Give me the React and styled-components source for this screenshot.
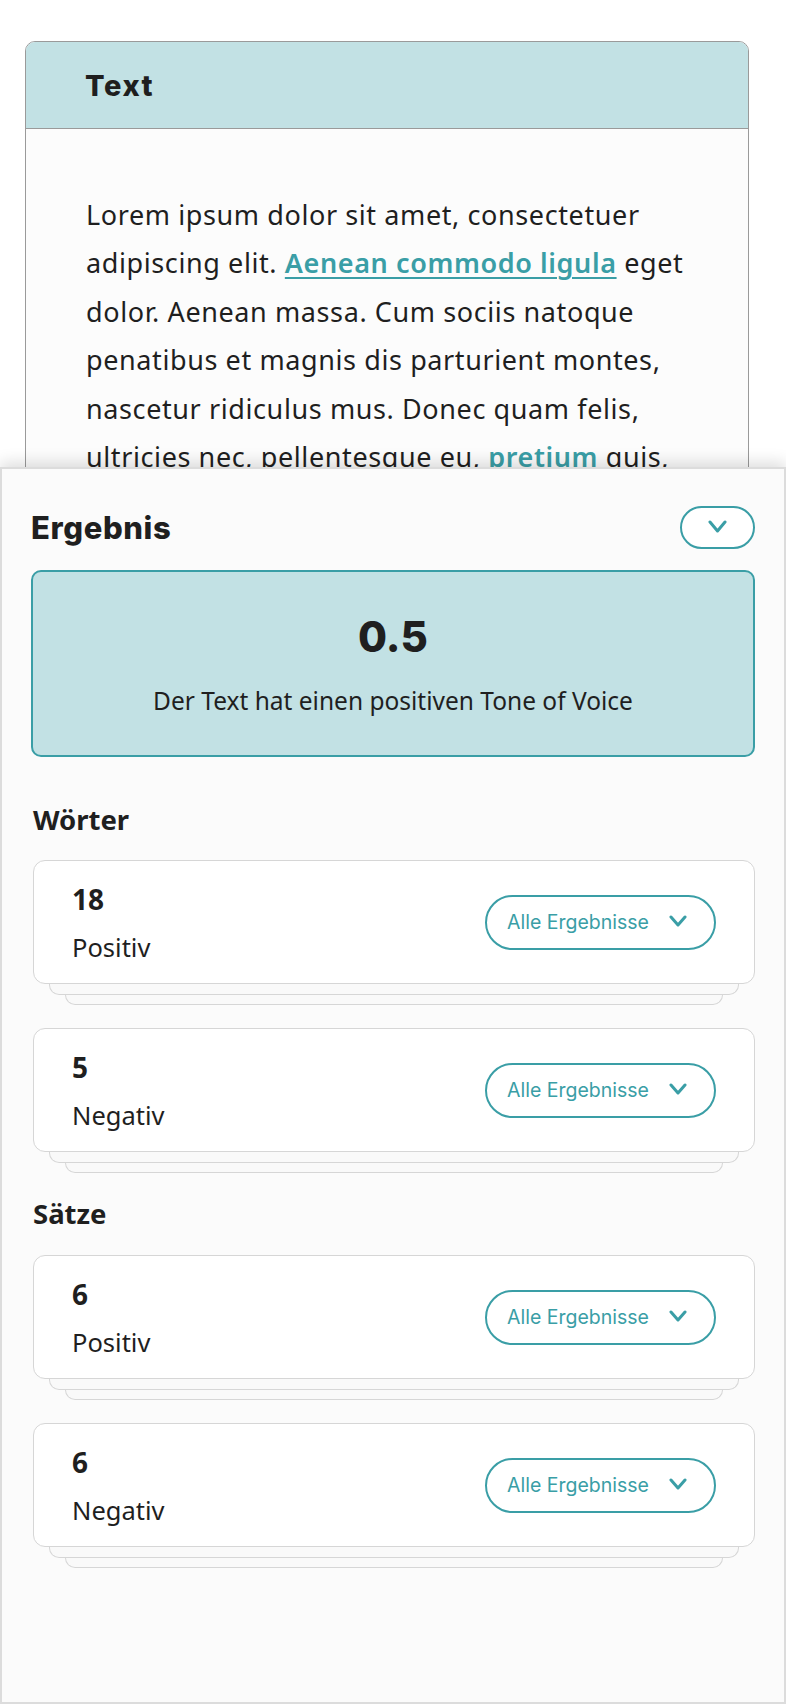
import styled, { createGlobalStyle } from "styled-components";

const TEAL = "#3a9ea6";
const TEAL_LIGHT = "#c2e1e4";
const INK = "#1f1f1f";

const GlobalStyle = createGlobalStyle`
  html, body {
    margin: 0;
    padding: 0;
    background: #ffffff;
    overflow: hidden;
  }
  #root {
    position: relative;
    width: 786px;
    height: 1704px;
    overflow: hidden;
  }
  * {
    box-sizing: border-box;
    font-variant-ligatures: none;
  }
`;

const Page = styled.div`
  padding: 41px 37px 0 25px;
  font-family: "Noto Sans", "Open Sans", sans-serif;
  color: ${INK};
`;

const TextCard = styled.section`
  border: 1.5px solid #9a9a9a;
  border-radius: 10px 10px 0 0;
  background: #fcfcfc;
  overflow: hidden;
`;

const CardHeader = styled.header`
  height: 87px;
  display: flex;
  align-items: center;
  padding-left: 59px;
  background: ${TEAL_LIGHT};
  border-bottom: 1.5px solid #9a9a9a;
`;

const CardTitle = styled.h1`
  margin: 0;
  font-family: "Inter", sans-serif;
  font-weight: 800;
  font-size: 29px;
  letter-spacing: 1.6px;
`;

const Paragraph = styled.p`
  margin: 0;
  padding: 62px 50px 60px 60px;
  font-size: 27px;
  letter-spacing: 0.6px;
  line-height: 48.4px;
`;

const InlineLink = styled.a`
  color: ${TEAL};
  font-weight: 600;
  text-decoration: ${(p) => (p.$underline ? "underline" : "none")};
  text-decoration-thickness: 2px;
  text-underline-offset: 4px;
`;

/* bottom sheet that slides over the text card */
const Sheet = styled.aside`
  position: absolute;
  top: 467px;
  left: 0;
  right: 0;
  bottom: 0;
  background: #fbfbfb;
  border: 2px solid #dcdcdc;
  box-shadow: 0 -5px 14px rgba(0, 0, 0, 0.13);
  padding: 37px 29px 0 29px;
  font-family: "Noto Sans", "Open Sans", sans-serif;
  color: ${INK};
`;

const SheetHead = styled.div`
  display: flex;
  align-items: center;
  justify-content: space-between;
`;

const SheetTitle = styled.h2`
  margin: 0;
  font-family: "Inter", sans-serif;
  font-weight: 800;
  font-size: 31px;
  letter-spacing: 0.6px;
`;

const PillButton = styled.button`
  display: flex;
  align-items: center;
  justify-content: center;
  gap: 20px;
  height: ${(p) => p.$h}px;
  min-width: ${(p) => p.$w}px;
  padding: 0 ${(p) => p.$pr}px 0 ${(p) => p.$pl}px;
  border: 2px solid ${TEAL};
  border-radius: 999px;
  background: #ffffff;
  color: ${TEAL};
  font-family: "Inter", sans-serif;
  font-size: 19.5px;
  cursor: pointer;
`;

const ScoreBox = styled.div`
  margin-top: 21px;
  height: 187px;
  border: 2px solid ${TEAL};
  border-radius: 10px;
  background: ${TEAL_LIGHT};
  display: flex;
  flex-direction: column;
  align-items: center;
  padding-top: 40px;
`;

const Score = styled.div`
  font-family: "Inter", sans-serif;
  font-weight: 800;
  font-size: 42px;
  line-height: 50px;
`;

const ScoreNote = styled.div`
  margin-top: 24px;
  font-size: 24.5px;
  line-height: 30px;
`;

const SectionTitle = styled.h3`
  margin: ${(p) => p.$top}px 0 ${(p) => p.$bottom}px 2px;
  font-weight: 700;
  font-size: 27.5px;
  line-height: 32px;
`;

const Stack = styled.div`
  margin: 0 0 ${(p) => p.$gap}px 2px;
`;

const ResultCard = styled.div`
  position: relative;
  z-index: 2;
  height: 124px;
  display: flex;
  align-items: center;
  justify-content: space-between;
  padding: 0 38px;
  background: #ffffff;
  border: 1.5px solid #d6d6d6;
  border-radius: 12px;
`;

const StackLayer = styled.div`
  height: ${(p) => p.$h}px;
  margin: 0 ${(p) => p.$inset}px;
  border: 1.5px solid #d6d6d6;
  border-top: none;
  border-radius: 0 0 10px 10px;
  background: #f9f9f9;
`;

const Figures = styled.div`
  display: flex;
  flex-direction: column;
  gap: 18px;
  padding-top: 2px;
`;

const Count = styled.div`
  font-weight: 700;
  font-size: 28px;
  line-height: 30px;
`;

const Label = styled.div`
  font-size: 25.5px;
  line-height: 30px;
`;

const Chevron = ({ w = 18, h = 10 }) => (
  <svg width={w} height={h + 4} viewBox={`0 0 ${w} ${h + 4}`} fill="none">
    <polyline
      points={`2,2 ${w / 2},${h} ${w - 2},2`}
      stroke={TEAL}
      strokeWidth="3"
      strokeLinecap="round"
      strokeLinejoin="round"
    />
  </svg>
);

// margins collapse with the previous stack's bottom margin (22px)
const groups = [
  {
    title: "Wörter",
    top: 47,
    bottom: 24,
    rows: [
      { count: 18, label: "Positiv" },
      { count: 5, label: "Negativ" },
    ],
  },
  {
    title: "Sätze",
    top: 25,
    bottom: 25,
    rows: [
      { count: 6, label: "Positiv" },
      { count: 6, label: "Negativ" },
    ],
  },
];

const Result = ({ count, label, gap }) => (
  <Stack $gap={gap}>
    <ResultCard>
      <Figures>
        <Count>{count}</Count>
        <Label>{label}</Label>
      </Figures>
      <PillButton $h={55} $w={231} $pl={17} $pr={24}>
        Alle Ergebnisse
        <Chevron />
      </PillButton>
    </ResultCard>
    <StackLayer $h={11} $inset={16} />
    <StackLayer $h={10} $inset={32} />
  </Stack>
);

export default function App() {
  return (
    <>
      <GlobalStyle />
      <Page>
        <TextCard>
          <CardHeader>
            <CardTitle>Text</CardTitle>
          </CardHeader>
          <Paragraph>
            Lorem ipsum dolor sit amet, consectetuer adipiscing elit.{" "}
            <InlineLink href="#" $underline>
              Aenean commodo ligula
            </InlineLink>{" "}
            eget dolor. Aenean massa. Cum sociis natoque penatibus et magnis dis
            parturient montes, nascetur ridiculus mus. Donec quam felis,
            ultricies nec, pellentesque eu, <InlineLink href="#">pretium</InlineLink>{" "}
            quis, sem. Nulla consequat massa quis enim. Donec pede justo,
            fringilla vel, aliquet nec, vulputate eget, arcu. In enim justo,
            rhoncus ut, imperdiet a, venenatis vitae, justo.
          </Paragraph>
        </TextCard>
      </Page>

      <Sheet>
        <SheetHead>
          <SheetTitle>Ergebnis</SheetTitle>
          <PillButton $h={43} $w={75} $pl={0} $pr={0}>
            <Chevron w={19} h={11} />
          </PillButton>
        </SheetHead>

        <ScoreBox>
          <Score>0.5</Score>
          <ScoreNote>Der Text hat einen positiven Tone of Voice</ScoreNote>
        </ScoreBox>

        {groups.map((g) => (
          <div key={g.title}>
            <SectionTitle $top={g.top} $bottom={g.bottom}>
              {g.title}
            </SectionTitle>
            {g.rows.map((r, i) => (
              <Result
                key={i}
                count={r.count}
                label={r.label}
                gap={i === 0 ? 23 : 22}
              />
            ))}
          </div>
        ))}
      </Sheet>
    </>
  );
}
